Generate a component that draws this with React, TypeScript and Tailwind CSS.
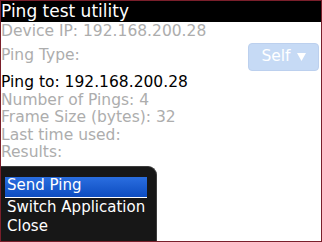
import React from "react";

export default function App() {
  return (
    <div
      className="relative w-[322px] h-[242px] overflow-hidden border border-[#7a1f2b] bg-white"
      style={{ fontFamily: '"DejaVu Sans", sans-serif' }}
    >
      <div className="h-[21px] bg-black text-white text-[17px] leading-[21px] whitespace-nowrap">
        Ping test utility
      </div>
      <div className="text-[15.5px] leading-[18px] text-[#adadad] whitespace-nowrap">
        Device IP: 192.168.200.28
      </div>
      <div className="flex justify-between h-[31px] pr-[2px]">
        <div className="mt-[6px] text-[15.5px] leading-[18px] text-[#adadad]">Ping Type:</div>
        <div className="mt-[3px] w-[71px] h-[28px] rounded-[4px] bg-[#c6daf5] border border-[#bcd0ee] flex items-center justify-center gap-[6px] text-white text-[15.5px]">
          <span>Self</span>
          <svg width="9" height="8" viewBox="0 0 9 8">
            <polygon points="0,0 9,0 4.5,8" fill="white" />
          </svg>
        </div>
      </div>
      <div className="mt-[3px] text-[15.5px] leading-[17.5px] whitespace-nowrap">
        <div className="text-black">Ping to: 192.168.200.28</div>
        <div className="text-[#adadad]">Number of Pings: 4</div>
        <div className="text-[#adadad]">Frame Size (bytes): 32</div>
        <div className="text-[#adadad]">Last time used:</div>
        <div className="text-[#adadad]">Results:</div>
      </div>

      <div className="absolute left-0 top-[165px] w-[156px] h-[80px] rounded-tr-[9px] bg-[#171717] border-t border-r border-[#3c3c3c] pt-[10px] pl-[4px] text-[15px] text-white whitespace-nowrap">
        <div className="w-[142px] h-[21px] bg-gradient-to-b from-[#2a6ee0] to-[#0d4cc0] border-b border-white pl-[2px] leading-[16px]">
          Send Ping
        </div>
        <div className="pl-[2px] leading-[18.5px]">Switch Application</div>
        <div className="pl-[2px] leading-[18.5px]">Close</div>
      </div>
    </div>
  );
}
